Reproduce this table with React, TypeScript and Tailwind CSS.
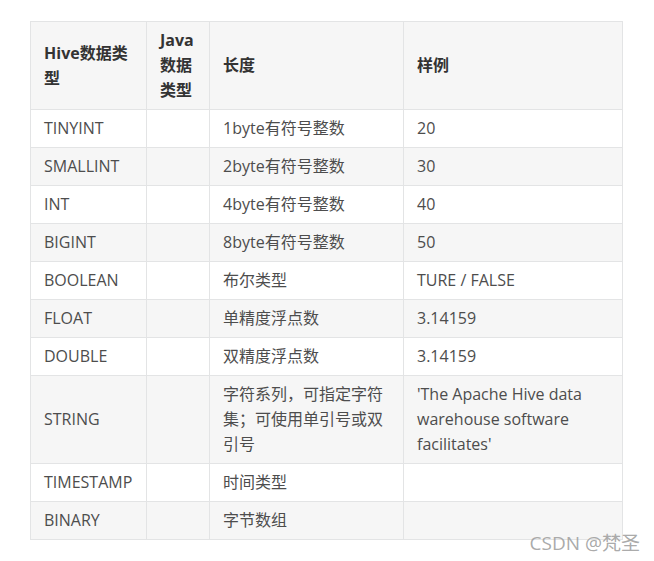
import React from 'react';

const rows: [string, string, string, string][] = [
  ['TINYINT', '', '1byte有符号整数', '20'],
  ['SMALLINT', '', '2byte有符号整数', '30'],
  ['INT', '', '4byte有符号整数', '40'],
  ['BIGINT', '', '8byte有符号整数', '50'],
  ['BOOLEAN', '', '布尔类型', 'TURE / FALSE'],
  ['FLOAT', '', '单精度浮点数', '3.14159'],
  ['DOUBLE', '', '双精度浮点数', '3.14159'],
  ['STRING', '', '字符系列，可指定字符集；可使用单引号或双引号', "'The Apache Hive data warehouse software facilitates'"],
  ['TIMESTAMP', '', '时间类型', ''],
  ['BINARY', '', '字节数组', ''],
];

const cell = 'border border-[#e3e4e5] px-[13px] py-[6px] align-middle';

export default function App() {
  return (
    <div
      className="relative h-[561px] w-[654px] bg-white pl-[30px] pt-[21px] text-[16px] leading-[25px] text-[#4d4d4d]"
      style={{ fontFamily: '"Open Sans", "Noto Sans CJK SC", sans-serif' }}
    >
      <table className="table-fixed border-collapse">
        <colgroup>
          <col className="w-[116px]" />
          <col className="w-[63px]" />
          <col className="w-[194px]" />
          <col className="w-[219px]" />
        </colgroup>
        <thead>
          <tr className="bg-[#f6f6f6] text-left font-bold text-[#333]">
            <th className={cell}>Hive数据类型</th>
            <th className={cell}>Java数据类型</th>
            <th className={cell}>长度</th>
            <th className={cell}>样例</th>
          </tr>
        </thead>
        <tbody>
          {rows.map((r, i) => (
            <tr key={r[0]} className={i % 2 === 1 ? 'bg-[#f6f6f6]' : 'bg-white'}>
              {r.map((c, j) => (
                <td key={j} className={cell}>
                  {c}
                </td>
              ))}
            </tr>
          ))}
        </tbody>
      </table>
      <span className="absolute right-[14px] top-[531px] text-[19px] leading-[24px] text-[#a0a0a0]/90">
        CSDN @梵圣
      </span>
    </div>
  );
}
